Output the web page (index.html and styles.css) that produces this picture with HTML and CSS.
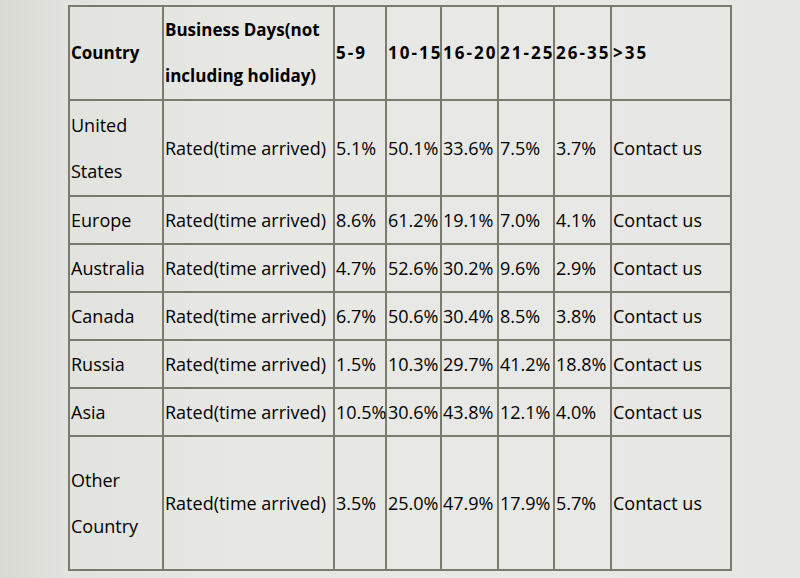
FILE: index.html
```html
<!DOCTYPE html>
<html>
<head>
<meta charset="utf-8">
<link rel="stylesheet" href="styles.css">
</head>
<body>
<table class="rates">
  <colgroup>
    <col class="c-country">
    <col class="c-days">
    <col class="c-a">
    <col class="c-b">
    <col class="c-c">
    <col class="c-d">
    <col class="c-e">
    <col class="c-f">
  </colgroup>
  <tr class="r-head">
    <th>Country</th>
    <th>Business Days(not including holiday)</th>
    <th class="rng">5-9</th>
    <th class="rng">10-15</th>
    <th class="rng">16-20</th>
    <th class="rng">21-25</th>
    <th class="rng">26-35</th>
    <th class="rng">&gt;35</th>
  </tr>
  <tr class="r-double">
    <td>United States</td>
    <td>Rated(time arrived)</td>
    <td>5.1%</td><td>50.1%</td><td>33.6%</td><td>7.5%</td><td>3.7%</td><td>Contact us</td>
  </tr>
  <tr class="r-single">
    <td>Europe</td>
    <td>Rated(time arrived)</td>
    <td>8.6%</td><td>61.2%</td><td>19.1%</td><td>7.0%</td><td>4.1%</td><td>Contact us</td>
  </tr>
  <tr class="r-single">
    <td>Australia</td>
    <td>Rated(time arrived)</td>
    <td>4.7%</td><td>52.6%</td><td>30.2%</td><td>9.6%</td><td>2.9%</td><td>Contact us</td>
  </tr>
  <tr class="r-single">
    <td>Canada</td>
    <td>Rated(time arrived)</td>
    <td>6.7%</td><td>50.6%</td><td>30.4%</td><td>8.5%</td><td>3.8%</td><td>Contact us</td>
  </tr>
  <tr class="r-single">
    <td>Russia</td>
    <td>Rated(time arrived)</td>
    <td>1.5%</td><td>10.3%</td><td>29.7%</td><td>41.2%</td><td>18.8%</td><td>Contact us</td>
  </tr>
  <tr class="r-single">
    <td>Asia</td>
    <td>Rated(time arrived)</td>
    <td>10.5%</td><td>30.6%</td><td>43.8%</td><td>12.1%</td><td>4.0%</td><td>Contact us</td>
  </tr>
  <tr class="r-last">
    <td>Other Country</td>
    <td>Rated(time arrived)</td>
    <td>3.5%</td><td>25.0%</td><td>47.9%</td><td>17.9%</td><td>5.7%</td><td>Contact us</td>
  </tr>
</table>
</body>
</html>
```
FILE: styles.css
```css
html, body {
  margin: 0;
  padding: 0;
}
body {
  width: 800px;
  height: 578px;
  overflow: hidden;
  background: linear-gradient(to right, #d9d9d3 0%, #e2e2de 8%, #e7e7e4 30%, #e8e8e6 70%, #e6e6e3 100%);
  font-family: "Comic Sans MS", "Open Sans", sans-serif;
  color: #000;
}
.rates {
  margin: 5px 0 0 68px;
  width: 664px;
  table-layout: fixed;
  border-collapse: collapse;
  font-size: 18px;
  line-height: 46px;
}
.rates th, .rates td {
  border: 2px solid #7a7b6d;
  padding: 0 1px;
  text-align: left;
  vertical-align: middle;
  white-space: nowrap;
  overflow: visible;
}
.rates th {
  font-size: 17px;
  font-weight: bold;
  white-space: normal;
}
.rates th.rng {
  letter-spacing: 2px;
  white-space: nowrap;
}
.rates td:first-child {
  white-space: normal;
}
.c-country { width: 94px; }
.c-days { width: 171px; }
.c-a { width: 52px; }
.c-b { width: 55px; }
.c-c { width: 57px; }
.c-d { width: 56px; }
.c-e { width: 57px; }
.c-f { width: 120px; }
.r-head { height: 94px; }
.r-double { height: 96px; }
.r-single { height: 48px; }
.r-last { height: 134px; }
```
